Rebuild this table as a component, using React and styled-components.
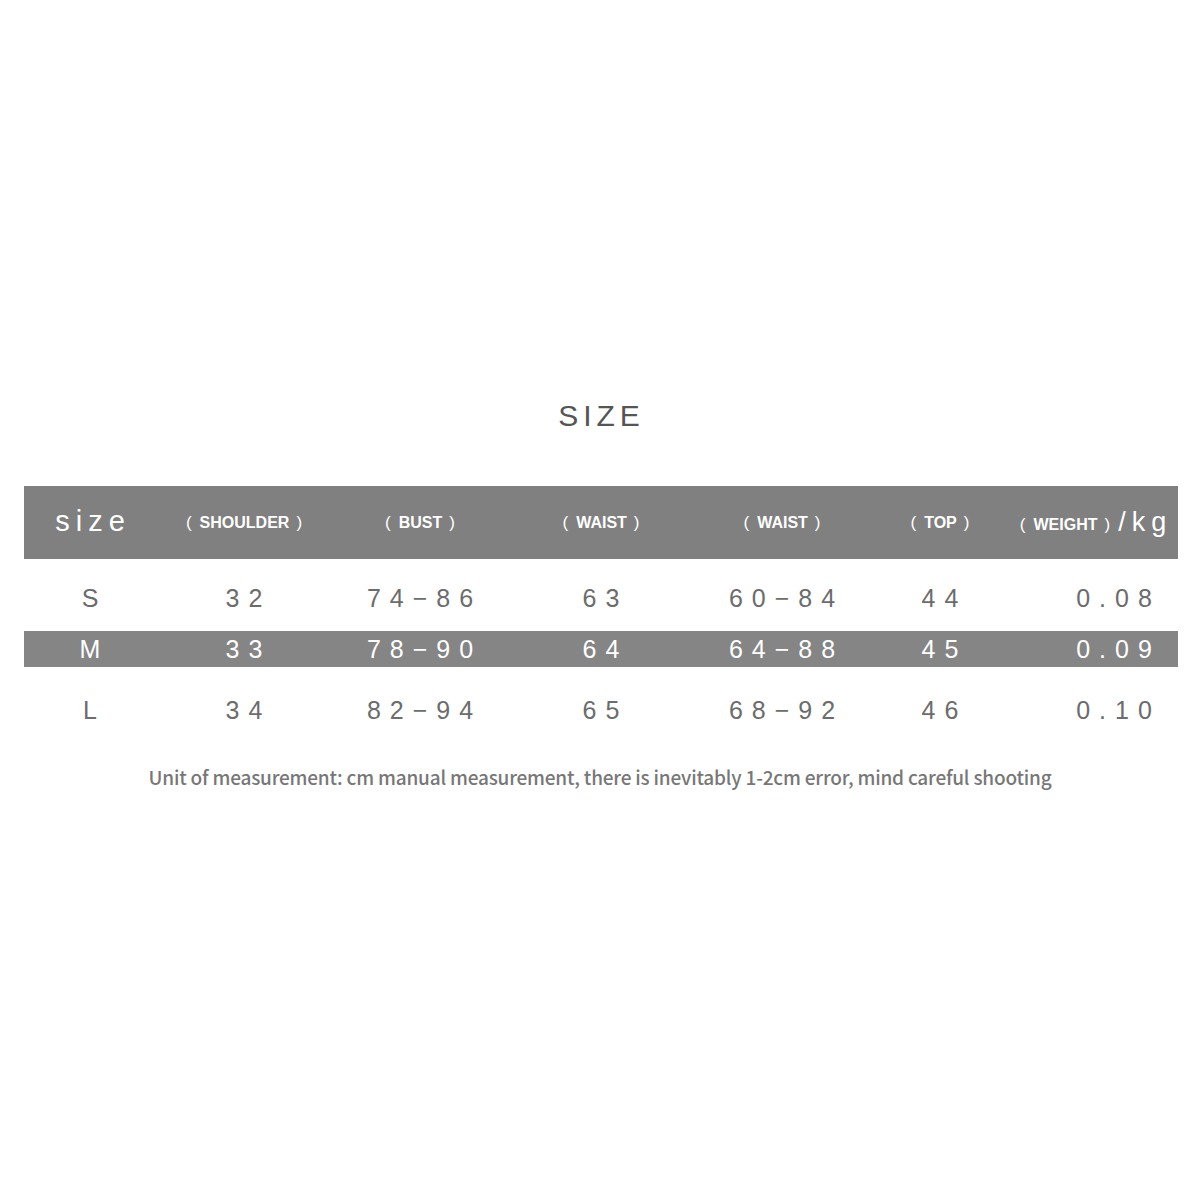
import React from 'react';
import styled, { createGlobalStyle } from 'styled-components';

const GlobalStyle = createGlobalStyle`
  html, body {
    margin: 0;
    padding: 0;
    background: #ffffff;
  }
`;

// column centres taken from the chart: 90, 244, 420, 601, 782, 940, 1094
const COLUMNS = '132px 176px 176px 186px 176px 140px 168px';

const headers = ['SHOULDER', 'BUST', 'WAIST', 'WAIST', 'TOP'];

const rows = [
  { size: 'S', values: ['32', '74−86', '63', '60−84', '44', '0.08'] },
  { size: 'M', values: ['33', '78−90', '64', '64−88', '45', '0.09'], shaded: true },
  { size: 'L', values: ['34', '82−94', '65', '68−92', '46', '0.10'] },
];

const Page = styled.div`
  width: 1200px;
  height: 1200px;
  padding-top: 400px;
  box-sizing: border-box;
  background: #fff;
`;

const Title = styled.h1`
  margin: 0 0 55px;
  text-align: center;
  font-family: "Liberation Sans", Arial, sans-serif;
  font-weight: normal;
  font-size: 30px;
  line-height: 31px;
  letter-spacing: 5px;
  padding-left: 3px;
  color: #555;
`;

const Table = styled.div`
  margin: 0 22px 0 24px;
  width: 1154px;
`;

const Row = styled.div`
  display: grid;
  grid-template-columns: ${COLUMNS};
  align-items: center;
  height: ${(p) => p.$height}px;
  background: ${(p) => (p.$shaded ? '#858585' : 'transparent')};
  color: ${(p) => (p.$shaded ? '#fff' : '#6c6c6c')};
  padding-top: ${(p) => p.$shift || 0}px;
  box-sizing: border-box;
`;

const HeaderBar = styled(Row)`
  background: #808080;
  color: #fff;
`;

const SizeLabel = styled.span`
  justify-self: center;
  font-family: "Liberation Sans", Arial, sans-serif;
  font-size: 29px;
  letter-spacing: 6px;
  padding-left: 6px;
  margin-top: -2px;
`;

const HeadLabel = styled.span`
  justify-self: center;
  font-family: "Liberation Sans", Arial, sans-serif;
  font-weight: bold;
  font-size: 16px;
  white-space: nowrap;
  margin-left: ${(p) => p.$offset || 0}px;
`;

const Paren = styled.span`
  margin: ${(p) => (p.$open ? '0 8px 0 0' : '0 0 0 7px')};
  font-weight: normal;
  font-size: 17px;
`;

const Unit = styled.span`
  font-weight: normal;
  font-size: 27px;
  letter-spacing: 6px;
  margin-left: 8px;
  vertical-align: -1px;
`;

const Cell = styled.span`
  justify-self: center;
  font-family: "Liberation Sans", Arial, sans-serif;
  font-size: 25px;
  letter-spacing: 9px;
  padding-left: 9px;
  margin-left: ${(p) => p.$offset || 0}px;
  white-space: nowrap;
`;

const Note = styled.p`
  margin: 10px 0 0;
  text-align: center;
  font-family: "Noto Sans CJK SC", "Noto Sans", sans-serif;
  font-weight: 500;
  font-size: 19px;
  color: #777;
  letter-spacing: -0.2px;
`;

const Label = ({ text, offset, children }) => (
  <HeadLabel $offset={offset}>
    <Paren $open>(</Paren>
    {text}
    <Paren>)</Paren>
    {children}
  </HeadLabel>
);

export default function App() {
  return (
    <Page>
      <GlobalStyle />
      <Title>SIZE</Title>
      <Table>
        <HeaderBar $height={73}>
          <SizeLabel>size</SizeLabel>
          {headers.map((h, i) => (
            <Label key={i} text={h} />
          ))}
          <Label text="WEIGHT" offset={4}>
            <Unit>/kg</Unit>
          </Label>
        </HeaderBar>
        {rows.map((r) => (
          <Row
            key={r.size}
            $shaded={r.shaded}
            $height={r.shaded ? 36 : r.size === 'S' ? 72 : 86}
            $shift={r.size === 'S' ? 6 : 0}
          >
            <Cell>{r.size}</Cell>
            {r.values.map((v, i) => (
              <Cell key={i} $offset={i === 5 ? 40 : 0}>
                {v}
              </Cell>
            ))}
          </Row>
        ))}
      </Table>
      <Note>
        Unit of measurement: cm manual measurement, there is inevitably 1-2cm error, mind careful shooting
      </Note>
    </Page>
  );
}
